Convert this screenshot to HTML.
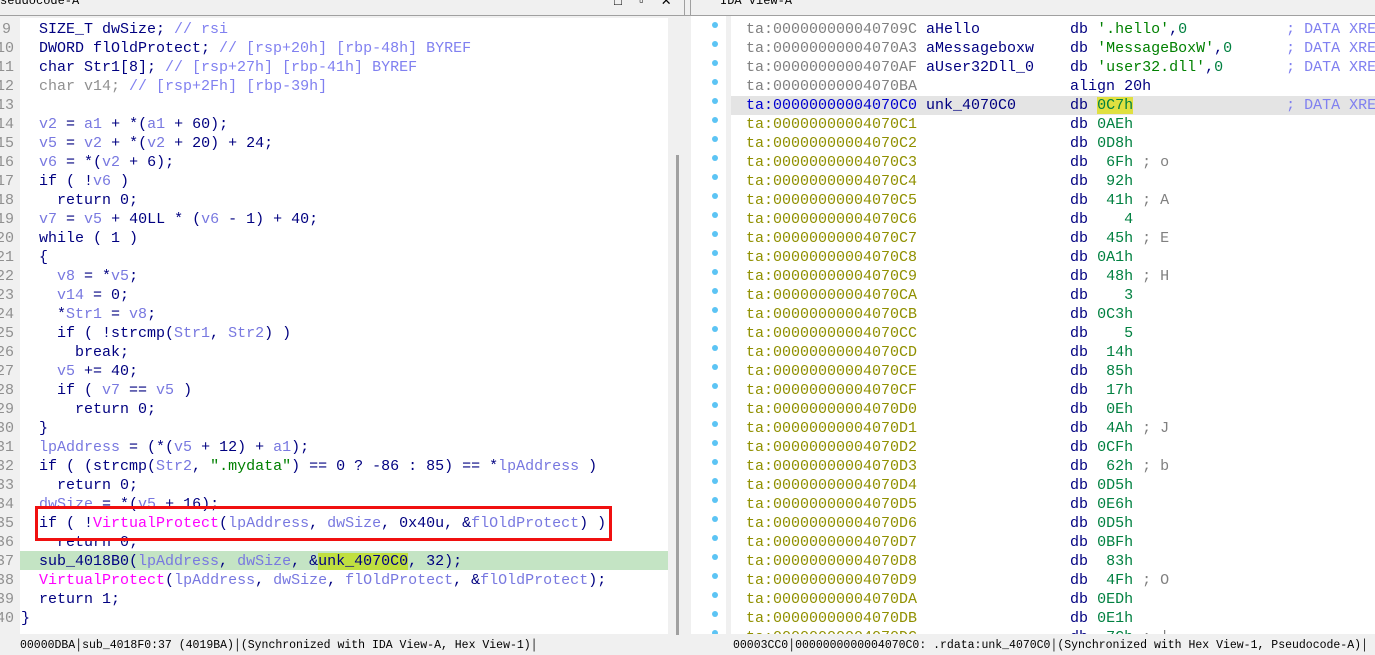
<!DOCTYPE html>
<html><head><meta charset="utf-8"><style>
body{margin:0;width:1375px;height:654px;overflow:hidden;background:#f0f0f0;font-family:"Liberation Mono",monospace;position:relative}
.a{position:absolute}
.code{font-size:15px;line-height:19px;white-space:pre;color:#000080}
.v{color:#7878e0}.c{color:#8080f0}.g{color:#909090}.f{color:#ff00ff}.s{color:#008000}.n{color:#000080}
.ad{color:#909000}.ag{color:#808080}.h{color:#008040}
.st{font-size:11.5px;line-height:18px;white-space:pre;color:#000}
</style></head><body>
<div class="a" style="left:0;top:0;width:1375px;height:15px;background:#f0f0f0;border-bottom:1px solid #a0a0a0"></div>
<div class="a" style="left:0;top:-6px;font:12px 'Liberation Mono',monospace">seudocode-A</div>
<div class="a" style="left:720px;top:-6px;font:12px 'Liberation Mono',monospace">IDA View-A</div>
<div class="a" style="left:614px;top:-6px;font-size:13px">□&nbsp;&nbsp;▫&nbsp;&nbsp;✕</div>
<div class="a" style="left:684px;top:0;width:1px;height:15px;background:#a0a0a0"></div>
<div class="a" style="left:690px;top:0;width:1px;height:15px;background:#a0a0a0"></div>
<!-- left pane -->
<div class="a" style="left:0;top:16px;width:20px;height:618px;background:#f0f0f0"></div>
<div class="a" style="left:20px;top:18px;width:648px;height:616px;background:#fff"></div>
<div class="a" style="left:676px;top:155px;width:3px;height:480px;background:#a0a0a0"></div>
<div class="a" style="left:20px;top:551px;width:648px;height:19px;background:#c4e4c4"></div>
<div class="a code g" style="left:-4px;top:20px;text-align:right;width:15px">9
10
11
12
13
14
15
16
17
18
19
20
21
22
23
24
25
26
27
28
29
30
31
32
33
34
35
36
37
38
39
40</div>
<div class="a code" style="left:21px;top:20px">  SIZE_T dwSize; <span class="c">// rsi</span>
  DWORD flOldProtect; <span class="c">// [rsp+20h] [rbp-48h] BYREF</span>
  char Str1[8]; <span class="c">// [rsp+27h] [rbp-41h] BYREF</span>
  <span class="g">char v14;</span> <span class="c">// [rsp+2Fh] [rbp-39h]</span>

  <span class="v">v2</span> = <span class="v">a1</span> + *(<span class="v">a1</span> + 60);
  <span class="v">v5</span> = <span class="v">v2</span> + *(<span class="v">v2</span> + 20) + 24;
  <span class="v">v6</span> = *(<span class="v">v2</span> + 6);
  if ( !<span class="v">v6</span> )
    return 0;
  <span class="v">v7</span> = <span class="v">v5</span> + 40LL * (<span class="v">v6</span> - 1) + 40;
  while ( 1 )
  {
    <span class="v">v8</span> = *<span class="v">v5</span>;
    <span class="v">v14</span> = 0;
    *<span class="v">Str1</span> = <span class="v">v8</span>;
    if ( !strcmp(<span class="v">Str1</span>, <span class="v">Str2</span>) )
      break;
    <span class="v">v5</span> += 40;
    if ( <span class="v">v7</span> == <span class="v">v5</span> )
      return 0;
  }
  <span class="v">lpAddress</span> = (*(<span class="v">v5</span> + 12) + <span class="v">a1</span>);
  if ( (strcmp(<span class="v">Str2</span>, <span class="s">".mydata"</span>) == 0 ? -86 : 85) == *<span class="v">lpAddress</span> )
    return 0;
  <span class="v">dwSize</span> = *(<span class="v">v5</span> + 16);
  if ( !<span class="f">VirtualProtect</span>(<span class="v">lpAddress</span>, <span class="v">dwSize</span>, 0x40u, &amp;<span class="v">flOldProtect</span>) )
    return 0;
  sub_4018B0(<span class="v">lpAddress</span>, <span class="v">dwSize</span>, &amp;<span style="background:#c0e040">unk_4070C0</span>, 32);
  <span class="f">VirtualProtect</span>(<span class="v">lpAddress</span>, <span class="v">dwSize</span>, <span class="v">flOldProtect</span>, &amp;<span class="v">flOldProtect</span>);
  return 1;
}</div>
<div class="a" style="left:35px;top:506px;width:571px;height:29px;border:3px solid #f01010"></div>
<div class="a st" style="left:20px;top:637px;width:664px;background:#f0f0f0">00000DBA│sub_4018F0:37 (4019BA)│(Synchronized with IDA View-A, Hex View-1)│</div>
<!-- right pane -->
<div class="a" style="left:691px;top:16px;width:684px;height:618px;background:#fff"></div>
<div class="a" style="left:726px;top:16px;width:5px;height:618px;background:#f0f0f0"></div>
<div class="a" style="left:731px;top:96px;width:644px;height:19px;background:#e4e4e4"></div>
<div class="a" id="dots" style="left:712px;top:20px"></div>
<div class="a code" style="left:746px;top:20px"><span class="ag">ta:000000000040709C</span> aHello          db <span class="s">'.hello'</span>,<span class="h">0</span>           <span class="c">; DATA XRE</span>
<span class="ag">ta:00000000004070A3</span> aMessageboxw    db <span class="s">'MessageBoxW'</span>,<span class="h">0</span>      <span class="c">; DATA XRE</span>
<span class="ag">ta:00000000004070AF</span> aUser32Dll_0    db <span class="s">'user32.dll'</span>,<span class="h">0</span>       <span class="c">; DATA XRE</span>
<span class="ag">ta:00000000004070BA</span>                 align 20h
<span style="color:#0000d0">ta:00000000004070C0</span> unk_4070C0      db <span class="h" style="background:#e0e040">0C7h</span>                 <span class="c">; DATA XRE</span>
<span class="ad">ta:00000000004070C1</span>                 db <span class="h">0AEh</span>
<span class="ad">ta:00000000004070C2</span>                 db <span class="h">0D8h</span>
<span class="ad">ta:00000000004070C3</span>                 db  <span class="h">6Fh</span> <span class="ag">; o</span>
<span class="ad">ta:00000000004070C4</span>                 db  <span class="h">92h</span>
<span class="ad">ta:00000000004070C5</span>                 db  <span class="h">41h</span> <span class="ag">; A</span>
<span class="ad">ta:00000000004070C6</span>                 db    <span class="h">4</span>
<span class="ad">ta:00000000004070C7</span>                 db  <span class="h">45h</span> <span class="ag">; E</span>
<span class="ad">ta:00000000004070C8</span>                 db <span class="h">0A1h</span>
<span class="ad">ta:00000000004070C9</span>                 db  <span class="h">48h</span> <span class="ag">; H</span>
<span class="ad">ta:00000000004070CA</span>                 db    <span class="h">3</span>
<span class="ad">ta:00000000004070CB</span>                 db <span class="h">0C3h</span>
<span class="ad">ta:00000000004070CC</span>                 db    <span class="h">5</span>
<span class="ad">ta:00000000004070CD</span>                 db  <span class="h">14h</span>
<span class="ad">ta:00000000004070CE</span>                 db  <span class="h">85h</span>
<span class="ad">ta:00000000004070CF</span>                 db  <span class="h">17h</span>
<span class="ad">ta:00000000004070D0</span>                 db  <span class="h">0Eh</span>
<span class="ad">ta:00000000004070D1</span>                 db  <span class="h">4Ah</span> <span class="ag">; J</span>
<span class="ad">ta:00000000004070D2</span>                 db <span class="h">0CFh</span>
<span class="ad">ta:00000000004070D3</span>                 db  <span class="h">62h</span> <span class="ag">; b</span>
<span class="ad">ta:00000000004070D4</span>                 db <span class="h">0D5h</span>
<span class="ad">ta:00000000004070D5</span>                 db <span class="h">0E6h</span>
<span class="ad">ta:00000000004070D6</span>                 db <span class="h">0D5h</span>
<span class="ad">ta:00000000004070D7</span>                 db <span class="h">0BFh</span>
<span class="ad">ta:00000000004070D8</span>                 db  <span class="h">83h</span>
<span class="ad">ta:00000000004070D9</span>                 db  <span class="h">4Fh</span> <span class="ag">; O</span>
<span class="ad">ta:00000000004070DA</span>                 db <span class="h">0EDh</span>
<span class="ad">ta:00000000004070DB</span>                 db <span class="h">0E1h</span>
<span class="ad">ta:00000000004070DC</span>                 db  <span class="h">7Ch</span> <span class="ag">; |</span></div>
<div class="a" style="left:691px;top:634px;width:684px;height:20px;background:#f0f0f0"></div>
<div class="a st" style="left:733px;top:637px">00003CC0│0000000000004070C0: .rdata:unk_4070C0│(Synchronized with Hex View-1, Pseudocode-A)│</div>
<div class="a" style="left:0;top:634px;width:20px;height:20px;background:#f0f0f0"></div>
<script>
var d=document.getElementById('dots'),h='';
for(var i=0;i<33;i++)h+='<div style="position:absolute;left:0;top:'+(i*19+2)+'px;width:6px;height:6px;border-radius:3px;background:#5cc4f4"></div>';
d.innerHTML=h;
</script>
</body></html>
